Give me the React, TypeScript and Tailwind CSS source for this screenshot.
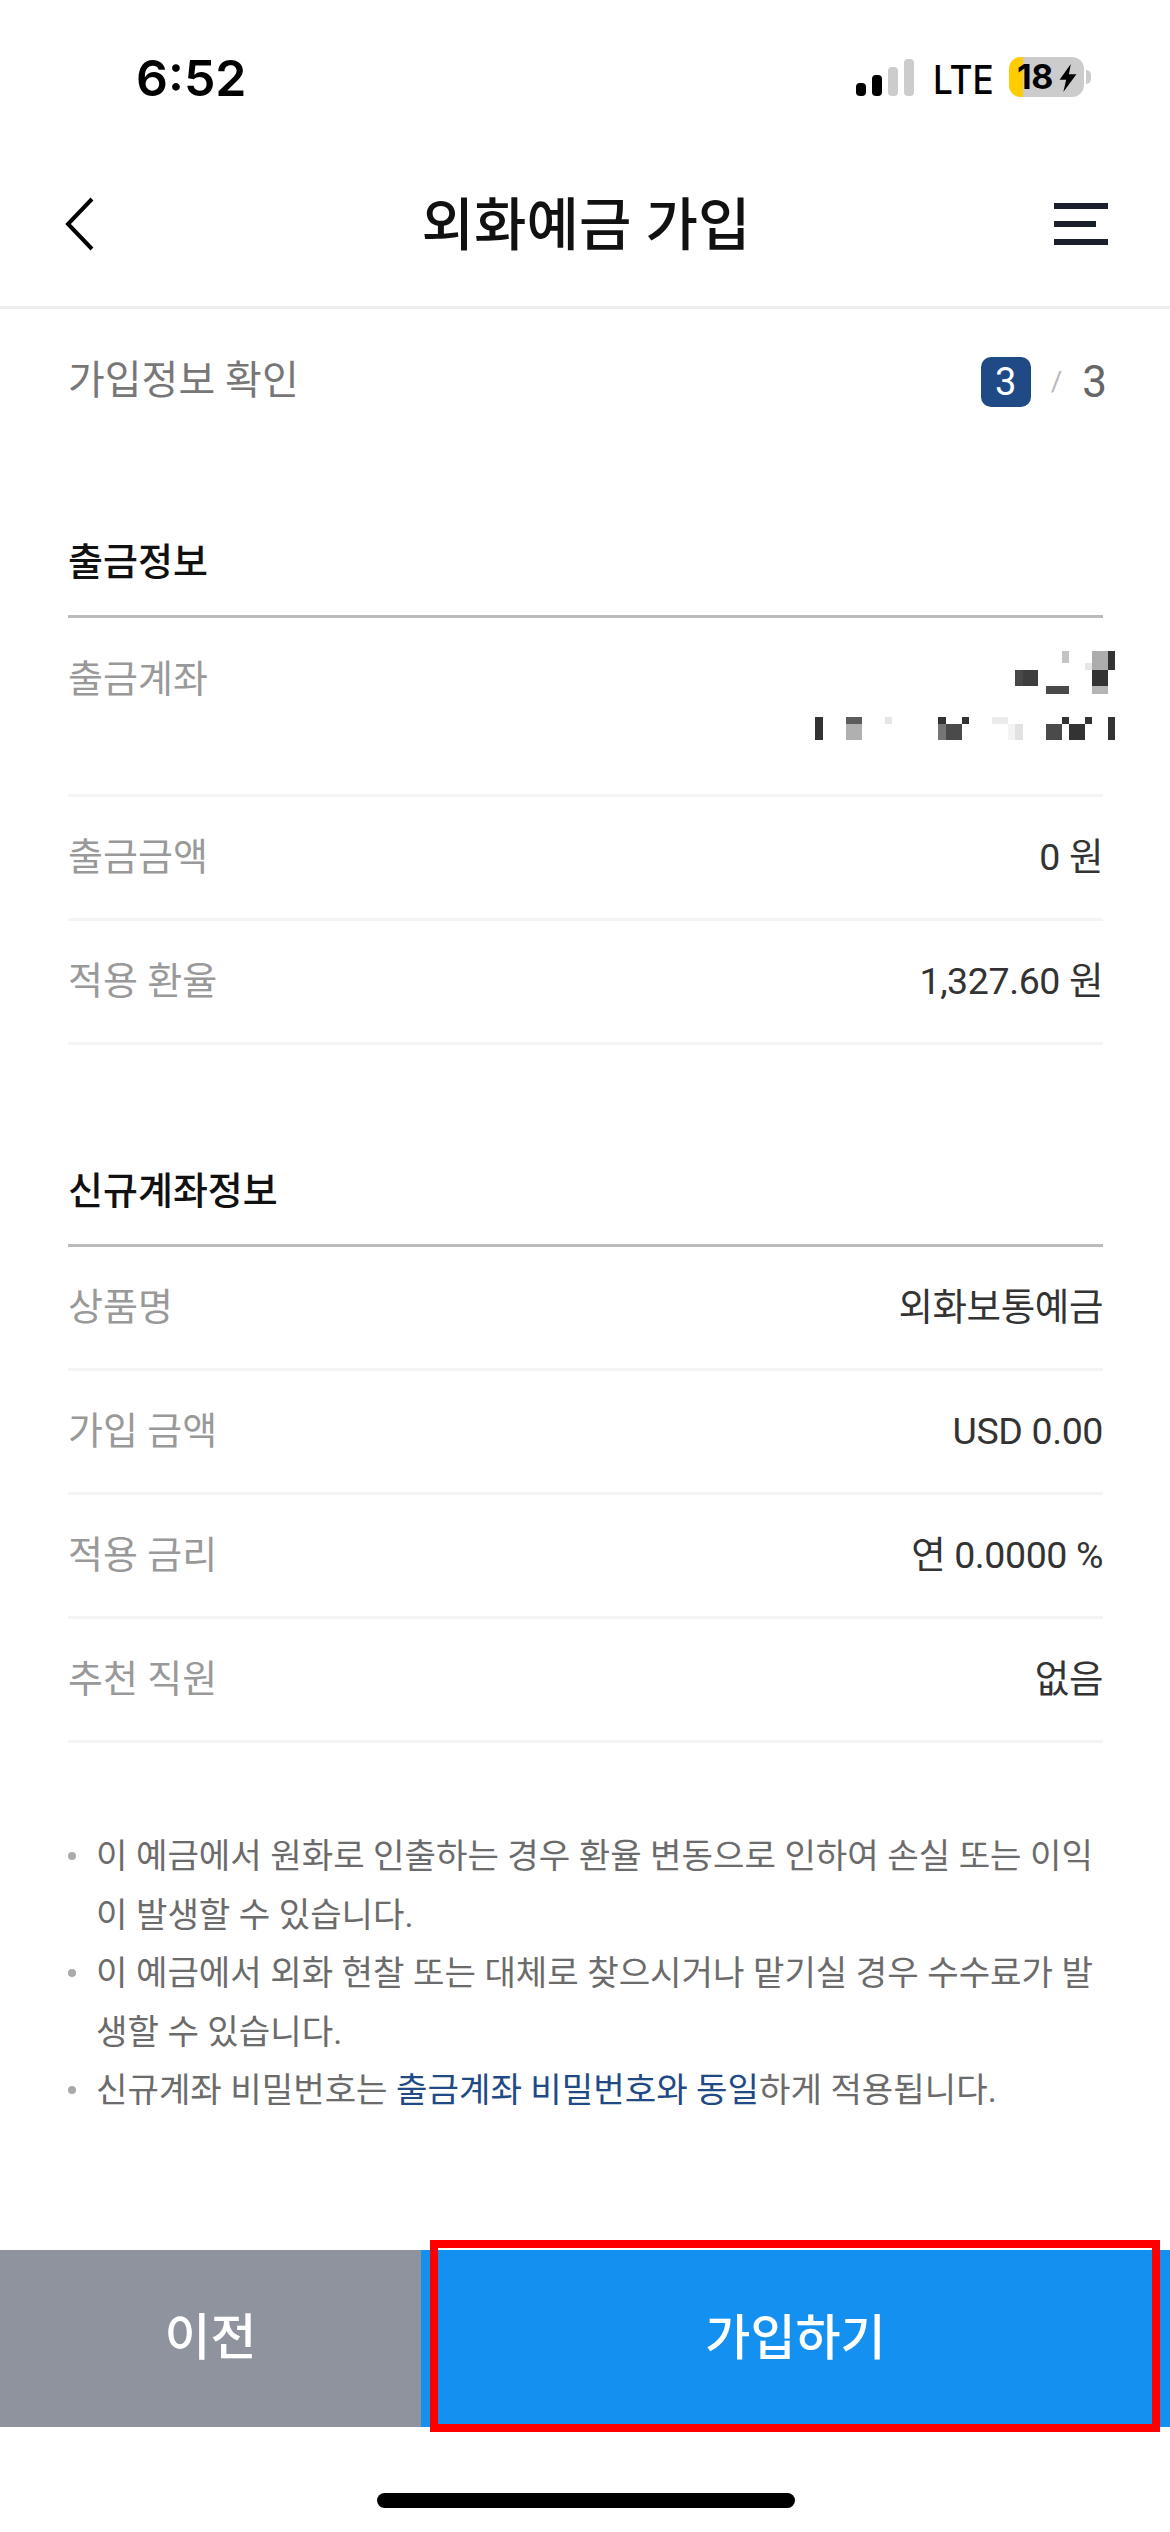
const FONT = "font-['Roboto','Noto_Sans_CJK_KR',sans-serif]";

function Row({ label, value }: { label: string; value: string }) {
  return (
    <div className="flex h-[124px] items-center justify-between border-b-[3px] border-[#f4f4f4]">
      <span className="text-[38px] text-[#999999]">{label}</span>
      <span className="text-[37.5px] tracking-[-0.4px] text-[#333333]">{value}</span>
    </div>
  );
}

function SectionHead({ title }: { title: string }) {
  return (
    <div className="flex h-[90px] items-center border-b-[3px] border-[#bbbbbb] pb-[18px]">
      <h2 className="text-[38px] font-medium text-[#111111]">{title}</h2>
    </div>
  );
}

const mosaic: [number, number, number, number, string][] = [
  [846, 93, 21, 36, "#c4c4c4"],
  [936, 93, 48, 57, "#adadad"],
  [984, 93, 21, 57, "#333333"],
  [915, 129, 21, 21, "#e6e6e6"],
  [705, 150, 24, 48, "#484848"],
  [729, 150, 45, 48, "#3e3e3e"],
  [936, 150, 48, 48, "#333333"],
  [798, 198, 69, 24, "#4a4a4a"],
  [936, 198, 48, 24, "#b5b5b5"],
  [105, 291, 24, 69, "#333333"],
  [198, 291, 48, 21, "#5c5c5c"],
  [198, 312, 48, 48, "#b0b0b0"],
  [315, 291, 21, 21, "#e6e6e6"],
  [474, 291, 24, 21, "#333333"],
  [474, 312, 24, 48, "#767676"],
  [498, 312, 48, 48, "#4a4a4a"],
  [546, 291, 21, 21, "#333333"],
  [636, 291, 48, 21, "#ebebeb"],
  [684, 312, 21, 48, "#f3f3f3"],
  [705, 312, 24, 48, "#e2e2e2"],
  [798, 312, 48, 48, "#4a4a4a"],
  [846, 291, 21, 21, "#333333"],
  [867, 312, 48, 48, "#333333"],
  [915, 291, 21, 21, "#333333"],
  [984, 291, 21, 69, "#333333"],
];

function Bullet({ children }: { children: React.ReactNode }) {
  return (
    <li className="flex">
      <span className="mt-[25px] mr-[20px] h-[8px] w-[8px] shrink-0 rounded-full bg-[#aaaaaa]" />
      <span>{children}</span>
    </li>
  );
}

export default function App() {
  return (
    <div className={`${FONT} relative flex h-[2532px] w-[1170px] flex-col overflow-hidden bg-white`}>
      {/* status bar */}
      <div className="flex h-[110px] items-start justify-between pl-[136px] pr-[79px]">
        <span className="mt-[43px] font-['Inter',sans-serif] text-[50px] leading-[70px] font-semibold text-black">6:52</span>
        <div className="mt-[57px] flex items-start">
          <svg width="60" height="40" viewBox="0 0 60 40">
            <rect x="2" y="26" width="10" height="13" rx="4" fill="#000" />
            <rect x="18" y="18" width="10" height="21" rx="4" fill="#000" />
            <rect x="34" y="10" width="10" height="29" rx="4" fill="#cccccc" />
            <rect x="50" y="2" width="10" height="37" rx="4" fill="#cccccc" />
          </svg>
          <span className="ml-[19px] inline-block w-[58px] origin-left scale-x-[0.88] font-['Inter',sans-serif] text-[40px] leading-[46px] font-medium text-black">LTE</span>
          <div className="relative ml-[18px] flex h-[40px] w-[75px] items-center rounded-[12px] bg-[#cccccc]">
            <div className="h-full w-[14px] rounded-l-[12px] bg-[#ffcc00]" />
            <span className="absolute left-[8px] top-[-1px] font-['Inter',sans-serif] text-[34px] leading-[42px] font-bold tracking-[-0.5px] text-black">18</span>
            <svg width="18" height="28" viewBox="0 0 18 30" className="absolute left-[50px] top-[7px]">
              <path d="M12 0 L0 17 H7 L4 30 L18 11 H10 Z" fill="#000" />
            </svg>
          </div>
          <div className="ml-[2px] mt-[13px] h-[14px] w-[5px] rounded-r-full bg-[#cccccc]" />
        </div>
      </div>

      {/* nav */}
      <div className="flex h-[199px] items-center justify-between border-b-[3px] border-[#eeeeee] pl-[64px] pr-[62px] pt-[32px]">
        <div className="w-[54px]">
          <svg width="30" height="54" viewBox="0 0 30 54" className="fill-none stroke-black stroke-[4]">
            <path d="M28 2 L4 27 L28 52" />
          </svg>
        </div>
        <h1 className="mt-[4px] text-[57px] leading-[70px] font-medium text-[#111111]">외화예금 가입</h1>
        <div className="flex w-[54px] flex-col gap-[12px]">
          <div className="h-[6px] w-full bg-[#1a202c]" />
          <div className="h-[6px] w-[42px] bg-[#1a202c]" />
          <div className="h-[6px] w-full bg-[#1a202c]" />
        </div>
      </div>

      {/* content */}
      <div className="flex flex-1 flex-col pl-[68px] pr-[67px]">
        <div className="flex h-[138px] items-center justify-between pt-[5px]">
          <span className="text-[40px] text-[#777777]">가입정보 확인</span>
          <div className="mr-[-4px] mt-[3px] flex items-center">
            <span className="flex h-[50px] w-[50px] items-center justify-center rounded-[10px] bg-[#1f4a85] text-[38px] text-white">3</span>
            <span className="ml-[20px] text-[28px] text-[#bbbbbb]">/</span>
            <span className="ml-[20px] text-[44px] text-[#666666]">3</span>
          </div>
        </div>

        <div className="mt-[81px]">
          <SectionHead title="출금정보" />
          <div className="flex h-[179px] items-start justify-between border-b-[3px] border-[#f4f4f4]">
            <span className="mt-[33px] text-[38px] text-[#999999]">출금계좌</span>
            <svg width="390" height="150" viewBox="0 0 1170 450" className="mr-[-67px] mt-[2px] shrink-0">
              {mosaic.map(([x, y, w, h, c], i) => (
                <rect key={i} x={x} y={y} width={w} height={h} fill={c} />
              ))}
            </svg>
          </div>
          <Row label="출금금액" value="0 원" />
          <Row label="적용 환율" value="1,327.60 원" />
        </div>

        <div className="mt-[112px]">
          <SectionHead title="신규계좌정보" />
          <Row label="상품명" value="외화보통예금" />
          <Row label="가입 금액" value="USD 0.00" />
          <Row label="적용 금리" value="연 0.0000 %" />
          <Row label="추천 직원" value="없음" />
        </div>

        <ul className="mt-[84px] text-[34.2px] leading-[58.5px] text-[#6b6b6b]">
          <Bullet>이 예금에서 원화로 인출하는 경우 환율 변동으로 인하여 손실 또는 이익이 발생할 수 있습니다.</Bullet>
          <Bullet>이 예금에서 외화 현찰 또는 대체로 찾으시거나 맡기실 경우 수수료가 발생할 수 있습니다.</Bullet>
          <Bullet>
            <span>신규계좌 비밀번호는 </span>
            <span className="text-[#1f4a85]">출금계좌 비밀번호와 동일</span>
            <span>하게 적용됩니다.</span>
          </Bullet>
        </ul>
      </div>

      {/* footer buttons */}
      <div className="flex h-[177px] shrink-0">
        <button className="flex w-[421px] items-center justify-center bg-[#8e939e] text-[50px] font-medium text-white">이전</button>
        <button className="flex flex-1 items-center justify-center bg-[#1390f0] text-[49px] font-medium text-white">가입하기</button>
      </div>
      <div className="flex h-[105px] shrink-0 justify-center pl-[2px] pt-[66px]">
        <div className="h-[15px] w-[418px] rounded-full bg-black" />
      </div>

      {/* red highlight annotation */}
      <div className="absolute left-[430px] top-[2240px] h-[192px] w-[730px] border-[8px] border-[#ff0000]" />
    </div>
  );
}
